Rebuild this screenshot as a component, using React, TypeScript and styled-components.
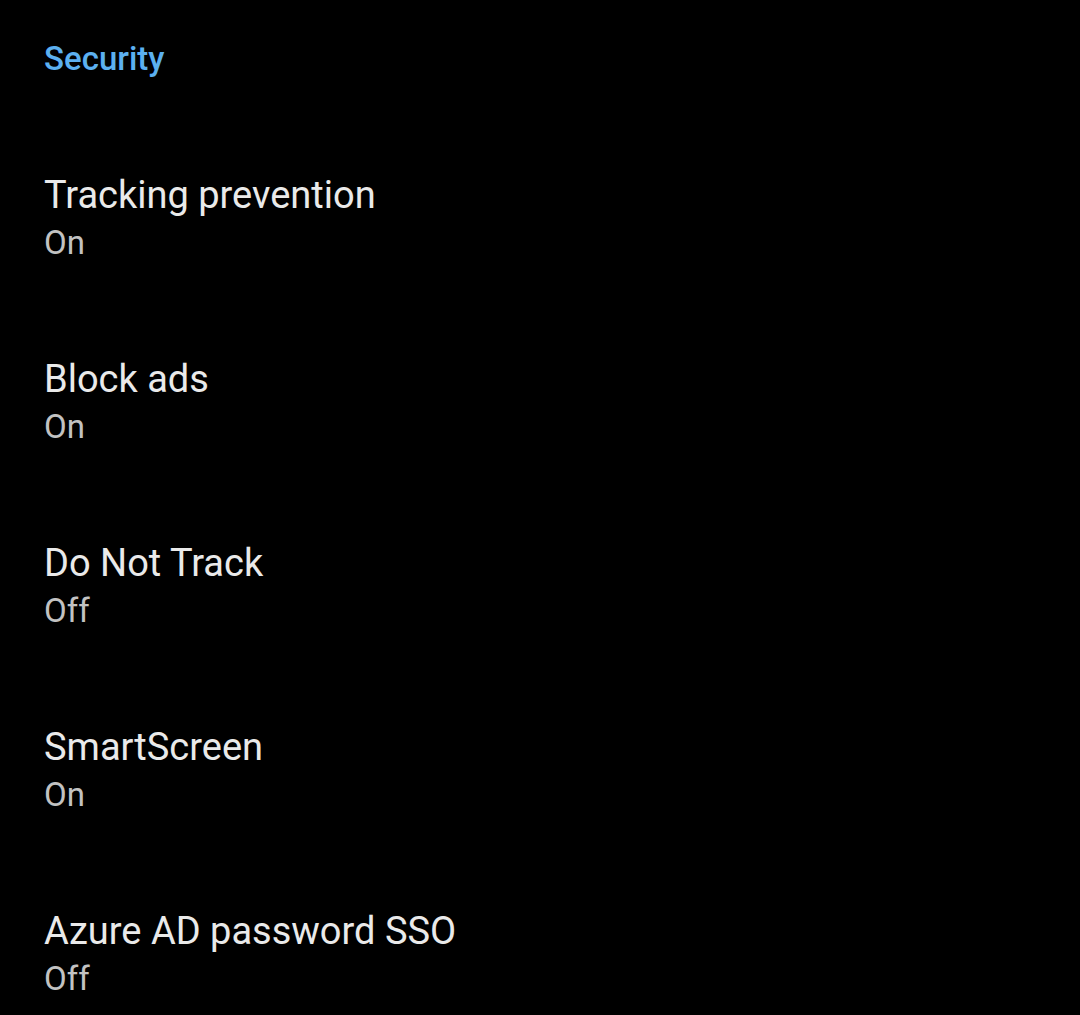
import styled, { createGlobalStyle } from 'styled-components';

const GlobalStyle = createGlobalStyle`
    html, body {
        margin: 0;
        padding: 0;
        background: #000;
    }
    body {
        font-family: Roboto, "Noto Sans", sans-serif;
        -webkit-font-smoothing: antialiased;
    }
`;

const Screen = styled.div`
    width: 1080px;
    height: 1015px;
    background: #000;
    overflow: hidden;
    padding: 0 44px;
    box-sizing: border-box;
`;

const SectionTitle = styled.h2`
    margin: 0;
    padding-top: 38px;
    font-size: 33px;
    line-height: 42px;
    font-weight: 500;
    color: #5cb0f0;
`;

const List = styled.ul`
    list-style: none;
    margin: 0;
    padding: 0;
    padding-top: 91px;
    display: flex;
    flex-direction: column;
    gap: 88px;
`;

const Item = styled.li`
    display: flex;
    flex-direction: column;
`;

const ItemTitle = styled.div`
    font-size: 38px;
    line-height: 48px;
    color: #eaeaea;
`;

const ItemValue = styled.div`
    font-size: 33px;
    line-height: 48px;
    color: #c2c2c2;
`;

const settings = [
    { title: 'Tracking prevention', value: 'On' },
    { title: 'Block ads', value: 'On' },
    { title: 'Do Not Track', value: 'Off' },
    { title: 'SmartScreen', value: 'On' },
    { title: 'Azure AD password SSO', value: 'Off' },
];

export default function App() {
    return (
        <>
            <GlobalStyle />
            <Screen>
                <SectionTitle>Security</SectionTitle>
                <List>
                    {settings.map((s) => (
                        <Item key={s.title}>
                            <ItemTitle>{s.title}</ItemTitle>
                            <ItemValue>{s.value}</ItemValue>
                        </Item>
                    ))}
                </List>
            </Screen>
        </>
    );
}
